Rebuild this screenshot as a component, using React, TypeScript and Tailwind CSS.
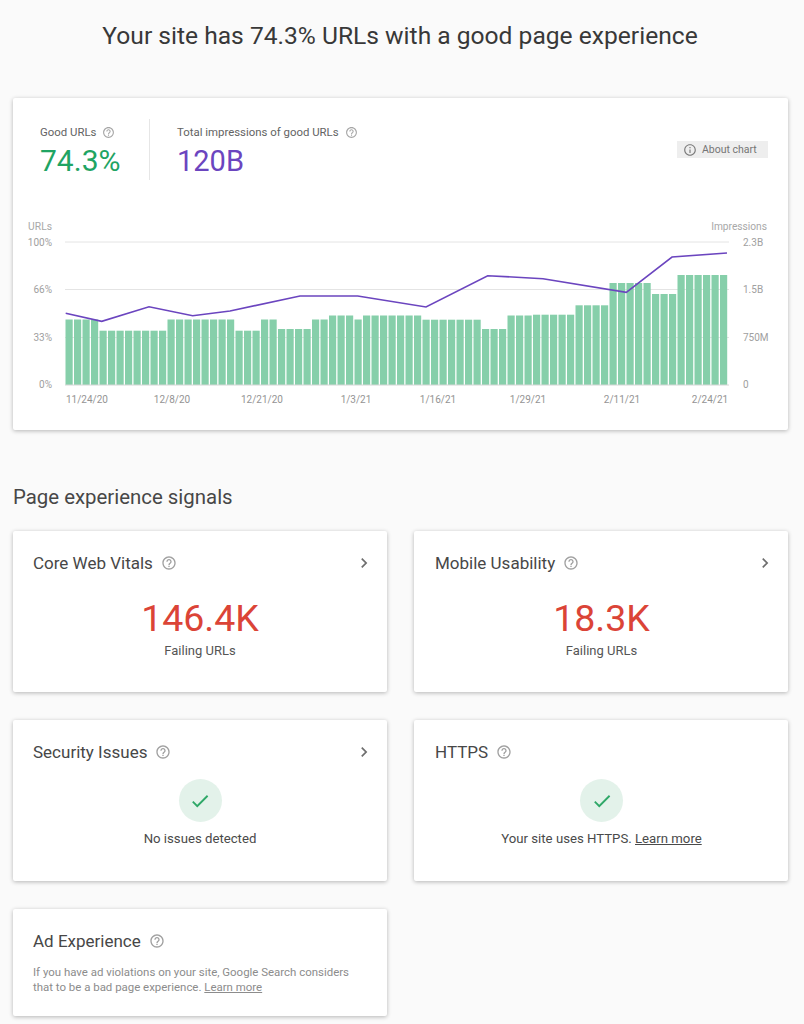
import React from 'react'

const HELP_PATH =
  'M11 18h2v-2h-2v2zm1-16C6.48 2 2 6.48 2 12s4.48 10 10 10 10-4.48 10-10S17.52 2 12 2zm0 18c-4.41 0-8-3.59-8-8s3.59-8 8-8 8 3.59 8 8-3.59 8-8 8zm0-14c-2.21 0-4 1.79-4 4h2c0-1.1.9-2 2-2s2 .9 2 2c0 2-3 1.75-3 5h2c0-2.25 3-2.5 3-5 0-2.21-1.79-4-4-4z'
const INFO_PATH =
  'M11 7h2v2h-2zm0 4h2v6h-2zm1-9C6.48 2 2 6.48 2 12s4.48 10 10 10 10-4.48 10-10S17.52 2 12 2zm0 18c-4.41 0-8-3.59-8-8s3.59-8 8-8 8 3.59 8 8-3.59 8-8 8z'

const Help = ({ className }: { className: string }) => (
  <svg viewBox="0 0 24 24" className={className} fill="currentColor">
    <path d={HELP_PATH} />
  </svg>
)

// run-length list of bar tops: [count, y of top]
const barRuns: [number, number][] = [
  [4, 319.5], [8, 330.7], [8, 319.5], [3, 330.7], [2, 319.5], [4, 329], [2, 319.5],
  [3, 315.5], [1, 319.5], [7, 315.5], [7, 319.7], [3, 329], [3, 315.5], [5, 314.7],
  [4, 305.3], [5, 283], [3, 294], [6, 275],
]
const barTops = barRuns.flatMap(([count, top]) => Array(count).fill(top) as number[])

const linePoints =
  '65.7,313.3 101.7,321.3 149,306.7 192.7,315.7 230,311 300,296 357.7,296 426,307 487.7,275.7 543,278.7 626.3,292.3 672,257 727,253'

const leftTicks: [string, number][] = [['100%', 242], ['66%', 289.5], ['33%', 337.5], ['0%', 384]]
const rightTicks: [string, number][] = [['2.3B', 242], ['1.5B', 289.5], ['750M', 337.5], ['0', 384]]
const dates: [string, number][] = [
  ['11/24/20', 87], ['12/8/20', 172], ['12/21/20', 262], ['1/3/21', 356],
  ['1/16/21', 438], ['1/29/21', 528], ['2/11/21', 622], ['2/24/21', 710],
]

const Chart = () => (
  // svg coordinates follow the page x, with y offset by the chart's top edge
  <svg viewBox="13 215 775 190" className="block w-[775px] h-[190px]" style={{ fontFamily: 'Roboto, sans-serif' }}>
    {[242, 289.5, 337.5].map(y => (
      <line key={y} x1="65" x2="729" y1={y} y2={y} stroke="#e4e4e4" strokeWidth="1" />
    ))}
    {barTops.map((top, i) => (
      <rect key={i} x={65.5 + i * 8.5} y={top} width="7.2" height={385 - top} fill="#86cfaa" />
    ))}
    <line x1="65" x2="729" y1="385" y2="385" stroke="#d6d6d6" strokeWidth="1" />
    <polyline points={linePoints} fill="none" stroke="#6b45bf" strokeWidth="1.6" />
    <text x="52" y="230" textAnchor="end" fontSize="10.3" fill="#a8a8a8">URLs</text>
    <text x="767" y="230" textAnchor="end" fontSize="10.2" fill="#a8a8a8">Impressions</text>
    {leftTicks.map(([label, y]) => (
      <text key={label} x="52" y={y + 3.5} textAnchor="end" fontSize="10" fill="#a0a0a0">{label}</text>
    ))}
    {rightTicks.map(([label, y]) => (
      <text key={label} x="743" y={y + 3.5} fontSize="10" fill="#a0a0a0">{label}</text>
    ))}
    {dates.map(([label, x]) => (
      <text key={label} x={x} y="403" textAnchor="middle" fontSize="10" fill="#949494">{label}</text>
    ))}
  </svg>
)

const Card = ({ title, arrow, className, children }: {
  title: string
  arrow?: boolean
  className: string
  children: React.ReactNode
}) => (
  <div className={`bg-white rounded-[2px] shadow-[0_1px_4px_rgba(0,0,0,0.28)] pt-[21px] pr-[13px] ${className}`}>
    <div className="flex items-center h-[22px]">
      <h3 className="text-[17px] leading-[22px] text-[#474747]">{title}</h3>
      <Help className="w-[16px] h-[16px] ml-[8px] text-[#a0a0a0]" />
      {arrow && (
        <svg viewBox="0 0 24 24" className="w-[20px] h-[20px] ml-auto text-[#6e6e6e]" fill="currentColor">
          <path d="M10 6L8.59 7.41 13.17 12l-4.58 4.59L10 18l6-6z" />
        </svg>
      )}
    </div>
    {children}
  </div>
)

const Failing = ({ value }: { value: string }) => (
  <div className="flex flex-col items-center mt-[21px] pr-[7px]">
    <div className="text-[37.5px] leading-[46px] text-[#db4437]">{value}</div>
    <div className="text-[13px] leading-[16px] mt-[2px] text-[#555555]">Failing URLs</div>
  </div>
)

const Passed = ({ children }: { children: React.ReactNode }) => (
  <div className="flex flex-col items-center mt-[16px] pr-[7px]">
    <div className="w-[43px] h-[43px] rounded-full bg-[#e3f2ea] flex items-center justify-center">
      <svg viewBox="0 0 24 24" className="w-[22px] h-[22px] text-[#2fa868]" fill="currentColor">
        <path d="M9 16.17L4.83 12l-1.42 1.41L9 19 21 7l-1.41-1.41z" />
      </svg>
    </div>
    <div className="text-[13.2px] leading-[18px] mt-[8px] text-[#4a4a4a]">{children}</div>
  </div>
)

export default function App() {
  return (
    <div className="min-h-[1024px] bg-[#fafafa] font-['Roboto',sans-serif] overflow-hidden">
      <h1 className="h-[98px] pt-[20px] pr-[4px] text-center text-[24.6px] leading-[32px] text-[#383838]">
        Your site has 74.3% URLs with a good page experience
      </h1>

      <div className="mx-[13px] w-[775px] h-[332px] bg-white rounded-[2px] shadow-[0_1px_4px_rgba(0,0,0,0.28)]">
        <div className="flex h-[117px] pt-[21px] pl-[27px] pr-[20px]">
          <div className="w-[110px] h-[61px] border-r border-[#e6e6e6]">
            <div className="flex items-center text-[11.4px] leading-[14px] text-[#636363] mt-[6px]">
              Good URLs
              <Help className="w-[13px] h-[13px] ml-[6px] text-[#a5a5a5]" />
            </div>
            <div className="text-[30px] leading-[34px] mt-[5px] text-[#1fa463]">74.3%</div>
          </div>
          <div className="pl-[27px]">
            <div className="flex items-center text-[11.4px] leading-[14px] text-[#636363] mt-[6px]">
              Total impressions of good URLs
              <Help className="w-[13px] h-[13px] ml-[6px] text-[#a5a5a5]" />
            </div>
            <div className="text-[29px] leading-[34px] mt-[5px] text-[#6b45bf]">120B</div>
          </div>
          <div className="ml-auto mt-[22px] h-[17px] w-[91px] bg-[#eeeeee] flex items-center pl-[6px] text-[10.5px] text-[#757575]">
            <svg viewBox="0 0 24 24" className="w-[14px] h-[14px] mr-[5px] text-[#7a7a7a]" fill="currentColor">
              <path d={INFO_PATH} />
            </svg>
            About chart
          </div>
        </div>
        <Chart />
      </div>

      <h2 className="mt-[54px] ml-[13px] text-[20.4px] leading-[26px] text-[#474747]">Page experience signals</h2>

      <div className="mt-[21px] mx-[13px] w-[775px] grid grid-cols-2 gap-x-[27px] gap-y-[28px]">
        <Card title="Core Web Vitals" arrow className="h-[161px] pl-[20px]">
          <Failing value="146.4K" />
        </Card>
        <Card title="Mobile Usability" arrow className="h-[161px] pl-[21px]">
          <Failing value="18.3K" />
        </Card>
        <Card title="Security Issues" arrow className="h-[161px] pl-[20px]">
          <Passed>No issues detected</Passed>
        </Card>
        <Card title="HTTPS" className="h-[161px] pl-[21px]">
          <Passed>
            Your site uses HTTPS. <span className="underline">Learn more</span>
          </Passed>
        </Card>
        <Card title="Ad Experience" className="h-[107px] pl-[20px]">
          <p className="mt-[13px] text-[11.45px] leading-[15px] text-[#8c8c8c]">
            If you have ad violations on your site, Google Search considers
            <br />
            that to be a bad page experience. <span className="underline">Learn more</span>
          </p>
        </Card>
      </div>
    </div>
  )
}
